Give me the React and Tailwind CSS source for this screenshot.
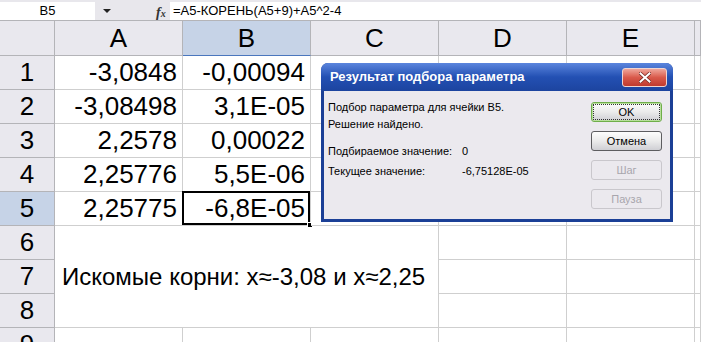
const COLS = ["A", "B", "C", "D", "E"];

const ROWS = [
  ["-3,0848", "-0,00094"],
  ["-3,08498", "3,1E-05"],
  ["2,2578", "0,00022"],
  ["2,25776", "5,5E-06"],
  ["2,25775", "-6,8E-05"],
];

const sheet = { fontFamily: '"Liberation Sans", Arial, sans-serif' };

function FormulaBar() {
  return (
    <div className="flex h-[21px] border-b border-[#b4b4b8] bg-[#e8e7ec] pt-[2px]">
      <div className="flex w-[95px] items-center justify-center bg-white text-[13px] text-black">B5</div>
      <div className="relative w-[75px]">
        <span className="absolute left-[8px] top-[7px] h-0 w-0 border-x-[4px] border-t-[4px] border-x-transparent border-t-[#222]" />
        <span
          className="absolute left-[61px] top-0 text-[14px] font-bold italic text-[#333]"
          style={{ fontFamily: '"Liberation Serif", serif' }}
        >
          f<span className="text-[10px]">x</span>
        </span>
      </div>
      <div className="flex flex-1 items-center bg-white pl-[3px] text-[13px] text-black">=A5-КОРЕНЬ(A5+9)+A5^2-4</div>
    </div>
  );
}

function Head({ children, active }) {
  return (
    <div
      className={`flex items-center justify-center border-b border-r text-[26px] text-black ${
        active ? "border-b-[#4a76bd] border-r-[#b4b4b8] bg-[#c6d3e7]" : "border-[#b4b4b8] bg-[#e9e8ee]"
      }`}
    >
      {children}
    </div>
  );
}

function RowHead({ children, active }) {
  return (
    <div
      className={`flex items-center justify-center border-b border-r border-[#b4b4b8] text-[26px] text-black ${
        active ? "bg-[#c6d3e7]" : "bg-[#e9e8ee]"
      }`}
    >
      {children}
    </div>
  );
}

function Cell({ children, selected }) {
  return (
    <div className="relative flex items-center justify-end border-b border-r border-[#cfcfcf] bg-white pr-[5px] text-[26px] text-black">
      {children}
      {selected && (
        <>
          <span className="absolute -left-px -top-px bottom-0 right-0 border-2 border-black" />
          <span className="absolute -bottom-[3px] -right-[3px] h-[6px] w-[6px] border border-white bg-black" />
        </>
      )}
    </div>
  );
}

function XpButton({ children, state }) {
  if (state === "disabled") {
    return (
      <div className="flex h-[20px] w-[71px] items-center justify-center rounded-[3px] border border-[#c9c7cc] text-[11px] text-[#a8a6ad]">
        {children}
      </div>
    );
  }
  return (
    <div
      className={`flex h-[20px] w-[71px] items-center justify-center rounded-[3px] border bg-gradient-to-b from-[#fdfdfd] via-[#ebebeb] to-[#cfcfd4] p-[1px] text-[11px] text-black ${
        state === "default" ? "border-[#6fae4a] shadow-[inset_0_0_0_1px_#b7df9b]" : "border-[#5d5d60]"
      }`}
    >
      <div
        className={`flex h-full w-full items-center justify-center ${
          state === "default" ? "border border-dotted border-[#333]" : ""
        }`}
      >
        {children}
      </div>
    </div>
  );
}

function GoalSeekDialog() {
  return (
    <div
      className="absolute left-[321px] top-[63px] flex h-[159px] w-[352px] flex-col overflow-hidden rounded-t-[7px] bg-[#1b3f96]"
      style={{ fontFamily: '"Liberation Sans", Tahoma, sans-serif' }}
    >
      <div className="flex h-[28px] shrink-0 items-center justify-between bg-gradient-to-b from-[#5b85dd] via-[#2350b3] to-[#1c449f] pl-[9px] pr-[6px]">
        <span className="text-[13px] font-bold text-white">Результат подбора параметра</span>
        <div className="flex h-[19px] w-[45px] items-center justify-center rounded-[3px] border border-[#f0d4d0] bg-gradient-to-b from-[#eea59b] via-[#d9594b] to-[#c03a2e]">
          <svg width="12" height="11" viewBox="0 0 12 11">
            <path d="M1.5 1.5 L10.5 9.5 M10.5 1.5 L1.5 9.5" stroke="#7a2b24" strokeWidth="3.6" strokeLinecap="square" />
            <path d="M1.5 1.5 L10.5 9.5 M10.5 1.5 L1.5 9.5" stroke="#ffffff" strokeWidth="2" strokeLinecap="square" />
          </svg>
        </div>
      </div>
      <div className="mx-[3px] mb-[3px] flex flex-1 justify-between bg-[#ebe9ee] pr-[8px]">
        <div className="pl-[4px] pt-[8px] text-[11px] leading-[17px] text-black">
          <p>Подбор параметра для ячейки B5.</p>
          <p>Решение найдено.</p>
          <p className="mt-[10px] flex">
            <span className="w-[134px]">Подбираемое значение:</span>
            <span>0</span>
          </p>
          <p className="mt-[3px] flex">
            <span className="w-[134px]">Текущее значение:</span>
            <span>-6,75128E-05</span>
          </p>
        </div>
        <div className="flex flex-col gap-[9px] pt-[11px]">
          <XpButton state="default">OK</XpButton>
          <XpButton>Отмена</XpButton>
          <XpButton state="disabled">Шаг</XpButton>
          <XpButton state="disabled">Пауза</XpButton>
        </div>
      </div>
    </div>
  );
}

export default function App() {
  return (
    <div className="relative h-[342px] w-[701px] overflow-hidden bg-white" style={sheet}>
      <FormulaBar />
      <div className="grid grid-cols-[55px_128px_128px_128px_128px_128px_1fr] grid-rows-[35px_repeat(9,34px)]">
        <Head />
        {COLS.map((c) => (
          <Head key={c} active={c === "B"}>
            {c}
          </Head>
        ))}
        <Head />

        {ROWS.map((r, i) => (
          <div key={i} className="contents">
            <RowHead active={i === 4}>{i + 1}</RowHead>
            <Cell>{r[0]}</Cell>
            <Cell selected={i === 4}>{r[1]}</Cell>
            <Cell />
            <Cell />
            <Cell />
            <Cell />
          </div>
        ))}

        <div className="col-span-3 col-start-2 row-span-3 row-start-7 flex items-center whitespace-nowrap border-b border-r border-[#cfcfcf] bg-white pl-[7px] text-[24px] text-black">
          Искомые корни: x≈-3,08 и x≈2,25
        </div>
        {[6, 7, 8].map((n) => (
          <div key={n} className="contents">
            <RowHead>{n}</RowHead>
            <Cell />
            <Cell />
            <Cell />
          </div>
        ))}

        <RowHead>9</RowHead>
        <Cell />
        <Cell />
        <Cell />
        <Cell />
        <Cell />
        <Cell />
      </div>
      <GoalSeekDialog />
    </div>
  );
}
